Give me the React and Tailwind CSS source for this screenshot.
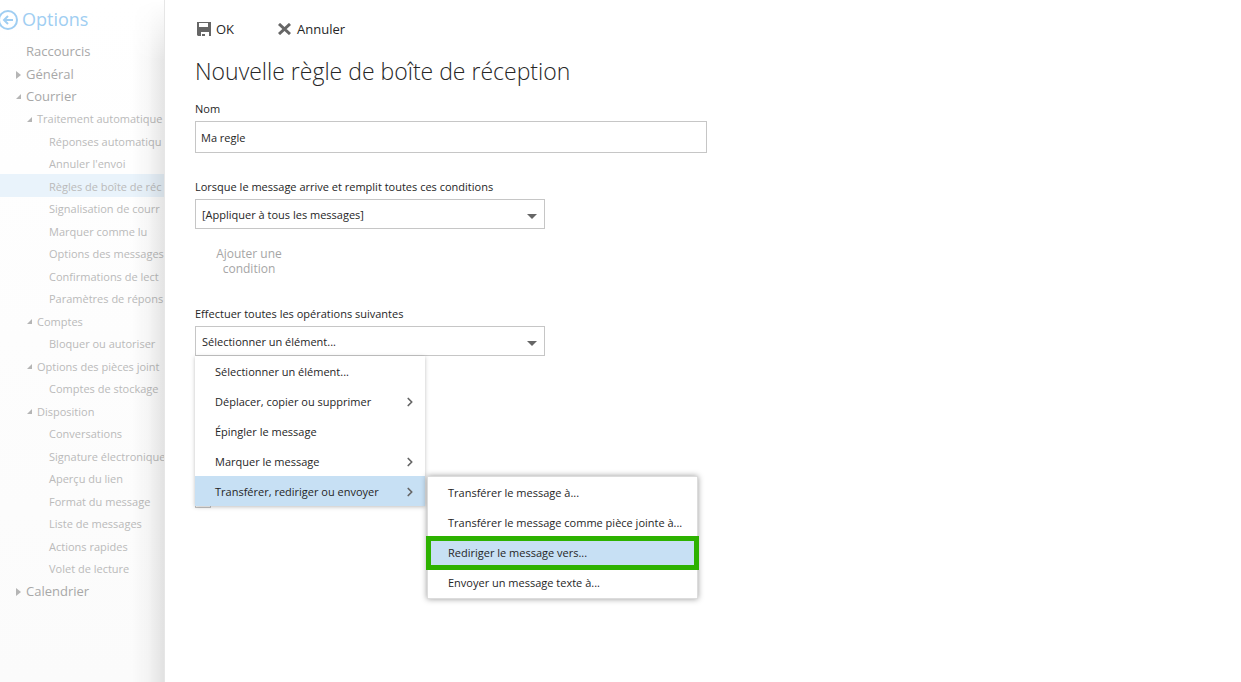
import { ChevronRight } from "lucide-react";

const NAV = [
  { label: "Raccourcis", level: 0 },
  { label: "Général", level: 0, open: false },
  { label: "Courrier", level: 0, open: true },
  { label: "Traitement automatique", level: 1, open: true },
  { label: "Réponses automatiqu", level: 2 },
  { label: "Annuler l'envoi", level: 2 },
  { label: "Règles de boîte de réc", level: 2, current: true },
  { label: "Signalisation de courr", level: 2 },
  { label: "Marquer comme lu", level: 2 },
  { label: "Options des messages", level: 2 },
  { label: "Confirmations de lect", level: 2 },
  { label: "Paramètres de répons", level: 2 },
  { label: "Comptes", level: 1, open: true },
  { label: "Bloquer ou autoriser", level: 2 },
  { label: "Options des pièces joint", level: 1, open: true },
  { label: "Comptes de stockage", level: 2 },
  { label: "Disposition", level: 1, open: true },
  { label: "Conversations", level: 2 },
  { label: "Signature électronique", level: 2 },
  { label: "Aperçu du lien", level: 2 },
  { label: "Format du message", level: 2 },
  { label: "Liste de messages", level: 2 },
  { label: "Actions rapides", level: 2 },
  { label: "Volet de lecture", level: 2 },
  { label: "Calendrier", level: 0, open: false },
];

const LEVELS = [
  "pl-4 text-[13px] font-medium text-[#a8a8a8]",
  "pl-[27px] text-[11px] text-[#bababa]",
  "pl-[39px] text-[11px] text-[#bababa]",
];

const ACTIONS = [
  { label: "Sélectionner un élément..." },
  { label: "Déplacer, copier ou supprimer", sub: true },
  { label: "Épingler le message" },
  { label: "Marquer le message", sub: true },
  { label: "Transférer, rediriger ou envoyer", sub: true, active: true },
];

const FORWARD = [
  { label: "Transférer le message à..." },
  { label: "Transférer le message comme pièce jointe à..." },
  { label: "Rediriger le message vers...", active: true },
  { label: "Envoyer un message texte à..." },
];

function Twisty({ open }) {
  return (
    <svg className="w-[5px] shrink-0" height="8" viewBox="0 0 5 8" fill="#b5b5b5" aria-hidden="true">
      {open === true && <path d="M5 1v5H0z" />}
      {open === false && <path d="M0 0l5 4-5 4z" />}
    </svg>
  );
}

function Sidebar() {
  return (
    <aside className="relative w-[165px] shrink-0 overflow-hidden border-r border-[#e6e6e6] bg-gradient-to-b from-white to-[#fbfbfb]">
      <button className="flex h-[39px] items-center gap-1 text-[18px] text-[#a0cef2]">
        <svg width="18" height="20" viewBox="0 0 18 20" fill="none" stroke="currentColor" strokeWidth="2" aria-hidden="true">
          <circle cx="8" cy="10" r="9" />
          <path d="M13 10H4M8 6l-4 4 4 4" />
        </svg>
        Options
      </button>
      <ul>
        {NAV.map((n) => (
          <li key={n.label} className={`odd:h-[23px] even:h-[22px] ${n.current ? "bg-[#e9f3fb]" : ""}`}>
            <a href="#" className={`flex h-full items-center gap-[5px] pt-[3px] whitespace-nowrap ${LEVELS[n.level]}`}>
              <Twisty open={n.open} />
              {n.label}
            </a>
          </li>
        ))}
      </ul>
      <div className="pointer-events-none absolute inset-y-0 right-0 w-8 bg-gradient-to-r from-transparent via-black/3 to-black/10 mask-t-from-[calc(100%-60px)]" />
    </aside>
  );
}

function Select({ id, label, option }) {
  return (
    <div className="flex flex-col items-start gap-1">
      <label htmlFor={id} className="text-[11px] leading-4">{label}</label>
      <div className="relative w-full max-w-[350px]">
        <select id={id} className="h-[30px] w-full appearance-none border border-[#c6c6c6] bg-white px-1.5 pt-0.5 text-[11px] outline-none">
          <option>{option}</option>
        </select>
        <svg className="pointer-events-none absolute top-[15px] right-2" width="10" height="5" viewBox="0 0 10 5" fill="#666" aria-hidden="true">
          <path d="M0 0h10L5 5z" />
        </svg>
      </div>
    </div>
  );
}

export default function App() {
  return (
    <div className="flex min-h-screen bg-white font-['Open_Sans','Noto_Sans',sans-serif] text-[#262626]">
      <Sidebar />
      <main className="min-w-0 grow px-[30px] pt-[19px]">
        <div className="flex gap-11 text-[13px] leading-5">
          <button className="flex items-center gap-[5px]">
            <svg width="16" height="14" viewBox="0 0 16 14" aria-hidden="true">
              <path fill="#666" fillRule="evenodd" d="M2 0h14v14H14v-4H6v4H3l-1-1zM4 1v5h9V1z" />
              <path fill="#666" d="M4 5h9v2H4zM7 12h3v2H7z" />
            </svg>
            OK
          </button>
          <button className="flex items-center gap-1.5">
            <svg width="13" height="12" viewBox="0 0 13 12" stroke="#666" strokeWidth="3" aria-hidden="true">
              <path d="M1 1l11 10M12 1L1 11" />
            </svg>
            Annuler
          </button>
        </div>
        <h1 className="mt-4 text-[23px] leading-8 font-light">Nouvelle règle de boîte de réception</h1>
        <div className="mt-3.5 flex flex-col gap-1">
          <label htmlFor="name" className="text-[11px] leading-4">Nom</label>
          <input id="name" defaultValue="Ma regle" className="h-8 w-full max-w-[512px] border border-[#c6c6c6] px-[5px] text-[11px] outline-none" />
        </div>
        <div className="mt-[26px]">
          <Select id="condition" label="Lorsque le message arrive et remplit toutes ces conditions" option="[Appliquer à tous les messages]" />
        </div>
        <button disabled className="mt-[17px] ml-3.5 block w-20 text-center text-[12px] leading-[15px] text-[#a6a6a6]">
          Ajouter une condition
        </button>
        <div className="relative mt-[30px]">
          <Select id="action" label="Effectuer toutes les opérations suivantes" option="Sélectionner un élément..." />
          <div role="menu" className="absolute top-[50px] left-0 z-10 w-[230px] bg-white text-[11px] shadow-[0_1px_4px_rgba(0,0,0,0.25)]">
            {ACTIONS.map((a) => (
              <button key={a.label} role="menuitem" className={`flex h-[30px] w-full items-center justify-between pt-0.5 pr-2 pl-5 whitespace-nowrap ${a.active ? "bg-[#c7e0f4]" : ""}`}>
                {a.label}
                {a.sub && <ChevronRight size={14} strokeWidth={3} color="#666" />}
              </button>
            ))}
            <div role="menu" className="absolute top-[120px] left-[232px] w-[271px] border border-[#dcdcdc] bg-white pt-px text-[11px] shadow-[0_0_6px_rgba(0,0,0,0.4)]">
              {FORWARD.map((f) => (
                <button key={f.label} role="menuitem" className={`flex h-[30px] w-full items-center pl-5 whitespace-nowrap ${f.active ? "bg-[#c7e0f4] outline-[5px] -outline-offset-[3px] outline-[#2db200] outline-solid" : ""}`}>
                  {f.label}
                </button>
              ))}
            </div>
          </div>
          <input type="checkbox" aria-label="Option de traitement" className="mt-[136px] block size-4 appearance-none border border-[#c6c6c6] bg-white" />
        </div>
      </main>
    </div>
  );
}
